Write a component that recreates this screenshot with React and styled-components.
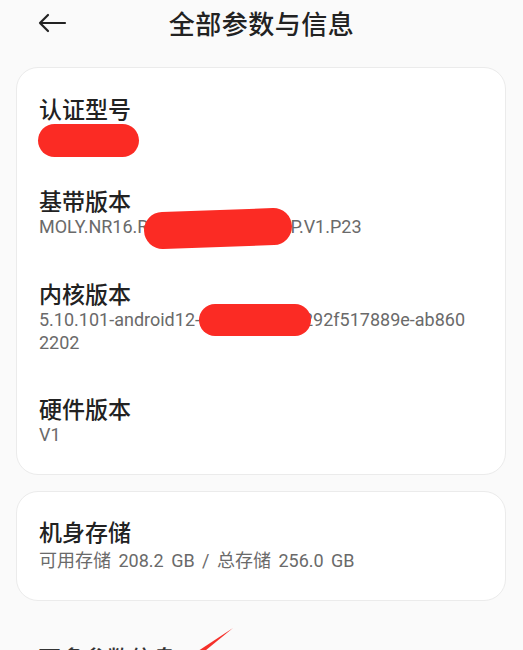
import React from 'react'
import styled, { createGlobalStyle } from 'styled-components'

const Global = createGlobalStyle`
  html, body {
    margin: 0;
    padding: 0;
    background: #fafafa;
  }
  body {
    font-family: Roboto, "Noto Sans", "Noto Sans CJK SC", sans-serif;
    -webkit-font-smoothing: antialiased;
  }
`

const Page = styled.div`
  position: relative;
  height: 650px;
  overflow: hidden;
  background: #fafafa;
`

const Header = styled.header`
  position: relative;
  height: 45px;
  display: flex;
  align-items: center;
  justify-content: center;
  margin-bottom: 22px;
`

const Back = styled.button`
  position: absolute;
  left: 36px;
  top: 8px;
  width: 32px;
  height: 30px;
  padding: 0;
  border: none;
  background: transparent;
  display: flex;
  align-items: center;
  justify-content: center;
`

const Title = styled.h1`
  margin: 0;
  font-size: 26px;
  font-weight: 500;
  color: #222;
  letter-spacing: 0.5px;
  font-family: "Noto Sans CJK SC", sans-serif;
`

const Card = styled.section`
  margin: 0 17px 16px 16px;
  background: #fff;
  border: 1px solid #ebebeb;
  border-radius: 22px;
  padding: ${p => p.$pad || '26px 22px 28px'};
  display: flex;
  flex-direction: column;
  gap: 40px;
`

const Item = styled.div`
  display: flex;
  flex-direction: column;
  gap: ${p => p.$gap || 2}px;
`

const Label = styled.div`
  font-family: "Noto Sans CJK SC", sans-serif;
  font-size: 23px;
  line-height: 28px;
  font-weight: 500;
  color: #222;
`

const Value = styled.div`
  font-size: 18px;
  line-height: 22px;
  color: #6a6a6a;
  white-space: nowrap;
  word-spacing: 3px;
`

const Redact = styled.span`
  position: relative;
  z-index: 1;
  display: inline-block;
  vertical-align: middle;
  width: ${p => p.$w}px;
  height: ${p => p.$h}px;
  margin: ${p => p.$m || '0'};
  background: #fb2b24;
  border-radius: ${p => p.$h / 2}px;
  transform: rotate(${p => p.$rot || 0}deg);
`

const BlockRedact = styled(Redact)`
  display: block;
`

const Cut = styled.div`
  margin: 42px 0 0 38px;
  font-family: "Noto Sans CJK SC", sans-serif;
  font-size: 23px;
  line-height: 28px;
  font-weight: 500;
  color: #333;
`

const Marker = styled.svg`
  position: absolute;
  left: 180px;
  top: 625px;
`

export default function App() {
  return (
    <Page>
      <Global />
      <Header>
        <Back aria-label="返回">
          <svg width="30" height="20" viewBox="0 0 30 20" fill="none">
            <path d="M28 10H3M11 2L3 10l8 8" stroke="#222" strokeWidth="2.2" strokeLinecap="round" strokeLinejoin="round" />
          </svg>
        </Back>
        <Title>全部参数与信息</Title>
      </Header>

      <Card>
        <Item>
          <Label>认证型号</Label>
          <BlockRedact $w={101} $h={33} $m="0 0 -11px -1px" />
        </Item>
        <Item>
          <Label>基带版本</Label>
          <Value>
            MOLY.NR16.R
            <Redact $w={148} $h={37} $rot={-2} $m="-8px -2px -8px -4px" />
            P.V1.P23
          </Value>
        </Item>
        <Item>
          <Label>内核版本</Label>
          <Value>
            5.10.101-android12-
            <Redact $w={112} $h={32} $m="-6px -8px -4px -1px" />
            292f517889e-ab860
            <br />
            2202
          </Value>
        </Item>
        <Item>
          <Label>硬件版本</Label>
          <Value>V1</Value>
        </Item>
      </Card>

      <Card $pad="25px 22px 28px">
        <Item $gap={5}>
          <Label>机身存储</Label>
          <Value>可用存储 208.2 GB / 总存储 256.0 GB</Value>
        </Item>
      </Card>

      <Cut>更多参数信息</Cut>
      <Marker width="60" height="30" viewBox="0 0 60 30">
        <path d="M53 3 L20 30 L12 30 Z" fill="#f5302a" />
      </Marker>
    </Page>
  )
}
